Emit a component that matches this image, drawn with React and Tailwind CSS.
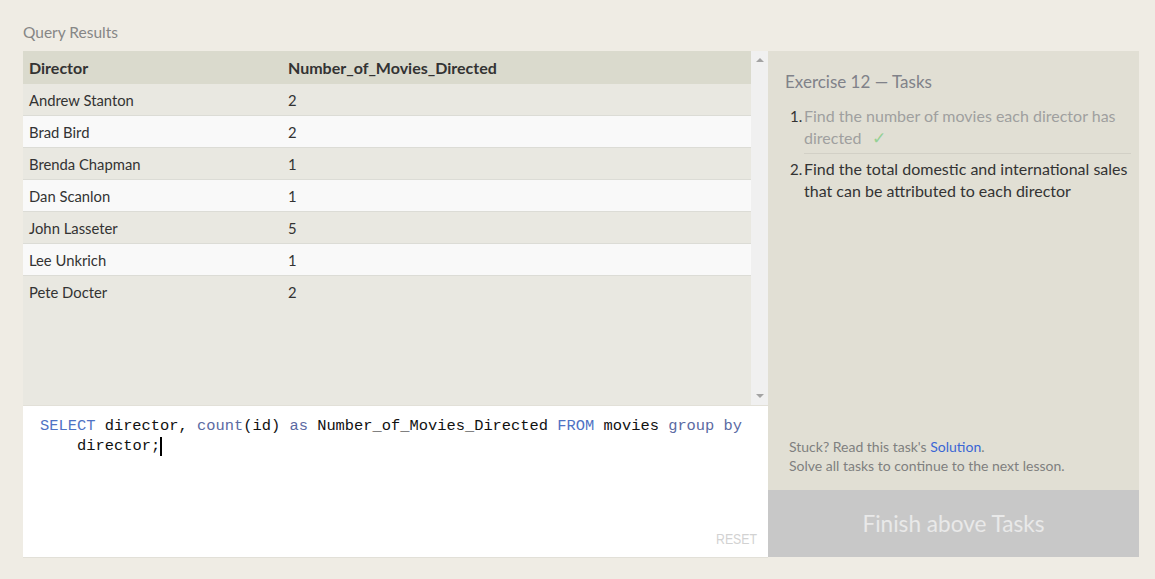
const rows = [
  ["Andrew Stanton", 2],
  ["Brad Bird", 2],
  ["Brenda Chapman", 1],
  ["Dan Scanlon", 1],
  ["John Lasseter", 5],
  ["Lee Unkrich", 1],
  ["Pete Docter", 2],
];

const kw = "text-[#4f72c4]";
const fn = "text-[#5b6aa3]";

export default function App() {
  return (
    <div className="h-[579px] w-[1155px] bg-[#efece4] pl-[23px] pt-[21px] font-['Lato','Noto_Sans',sans-serif]">
      <div className="h-[22px] text-[15.5px] leading-[22px] text-[#868686]">Query Results</div>
      <div className="mt-[8px] flex">
        {/* left column */}
        <div className="flex w-[745px] shrink-0 flex-col">
          <div className="flex h-[354px] bg-[#e9e8e1]">
            <div className="flex-1">
              <div className="flex h-[33px] items-center bg-[#dadacd] px-[6px] text-[16px] font-bold text-[#333]">
                <div className="w-[259px]">Director</div>
                <div>Number_of_Movies_Directed</div>
              </div>
              {rows.map(([name, n], i) => (
                <div
                  key={name}
                  className={`flex h-[32px] items-center px-[6px] pt-[1px] text-[14.8px] text-[#333] ${
                    i % 2 ? "bg-[#f9f9f9]" : "bg-[#e9e8e1]"
                  } ${i < rows.length - 1 ? "border-b border-[#dcdcd6]" : ""}`}
                >
                  <div className="w-[259px]">{name}</div>
                  <div>{n}</div>
                </div>
              ))}
            </div>
            <div className="flex w-[17px] flex-col items-center justify-between bg-[#f0f0f0] py-[7px]">
              <div className="h-0 w-0 border-x-[4px] border-b-[4px] border-x-transparent border-b-[#a3a3a3]" />
              <div className="h-0 w-0 border-x-[4px] border-t-[4px] border-x-transparent border-t-[#a3a3a3]" />
            </div>
          </div>
          <div className="relative h-[153px] border-b border-t border-[#e2e0d8] bg-white pl-[17px] pt-[10px] font-['Liberation_Mono',monospace] text-[15.4px] leading-[20px] text-[#111]">
            <div className="h-[20px]">
              <span className={kw}>SELECT</span> director, <span className={fn}>count</span>(id){" "}
              <span className={fn}>as</span> Number_of_Movies_Directed <span className={kw}>FROM</span> movies{" "}
              <span className={fn}>group by</span>
            </div>
            <div className="flex h-[20px] items-center pl-[37px]">
              <span>director;</span>
              <span className="h-[19px] w-[2px] bg-black" />
            </div>
            <div className="absolute bottom-[8px] right-[11px] origin-right scale-x-[0.82] font-['Liberation_Sans',sans-serif] text-[15px] text-[#d2d2d2]">
              RESET
            </div>
          </div>
        </div>
        {/* right column */}
        <div className="flex h-[506px] w-[371px] shrink-0 flex-col bg-[#e1dfd4]">
          <div className="flex-1 pl-[17px] pr-[8px] pt-[19px]">
            <div className="text-[17px] leading-[24px] text-[#808289]">Exercise 12 — Tasks</div>
            <ol className="mt-[11px] text-[16px] leading-[22px]">
              <li className="flex">
                <span className="ml-[5px] w-[14px] shrink-0 text-[15px] text-[#333]">1.</span>
                <div className="flex-1 border-b border-[#d2d0c6] pb-[4px] text-[#9f9f9f]">
                  Find the number of movies each director has directed
                  <span className="ml-[10px] text-[17px] leading-[20px] text-[#95d195]">✓</span>
                </div>
              </li>
              <li className="mt-[4px] flex text-[#333]">
                <span className="ml-[5px] w-[14px] shrink-0 text-[15px]">2.</span>
                <div className="flex-1">Find the total domestic and international sales that can be attributed to each director</div>
              </li>
            </ol>
          </div>
          <div className="px-[21px] pb-[15px] text-[14px] leading-[19px] text-[#7f7f7f]">
            <div>
              Stuck? Read this task's <span className="text-[#3a66d4]">Solution</span>.
            </div>
            <div>Solve all tasks to continue to the next lesson.</div>
          </div>
          <div className="flex h-[67px] items-center justify-center bg-[#c8c8c8] text-[22.6px] text-[#e9e9e9]">
            Finish above Tasks
          </div>
        </div>
      </div>
    </div>
  );
}
